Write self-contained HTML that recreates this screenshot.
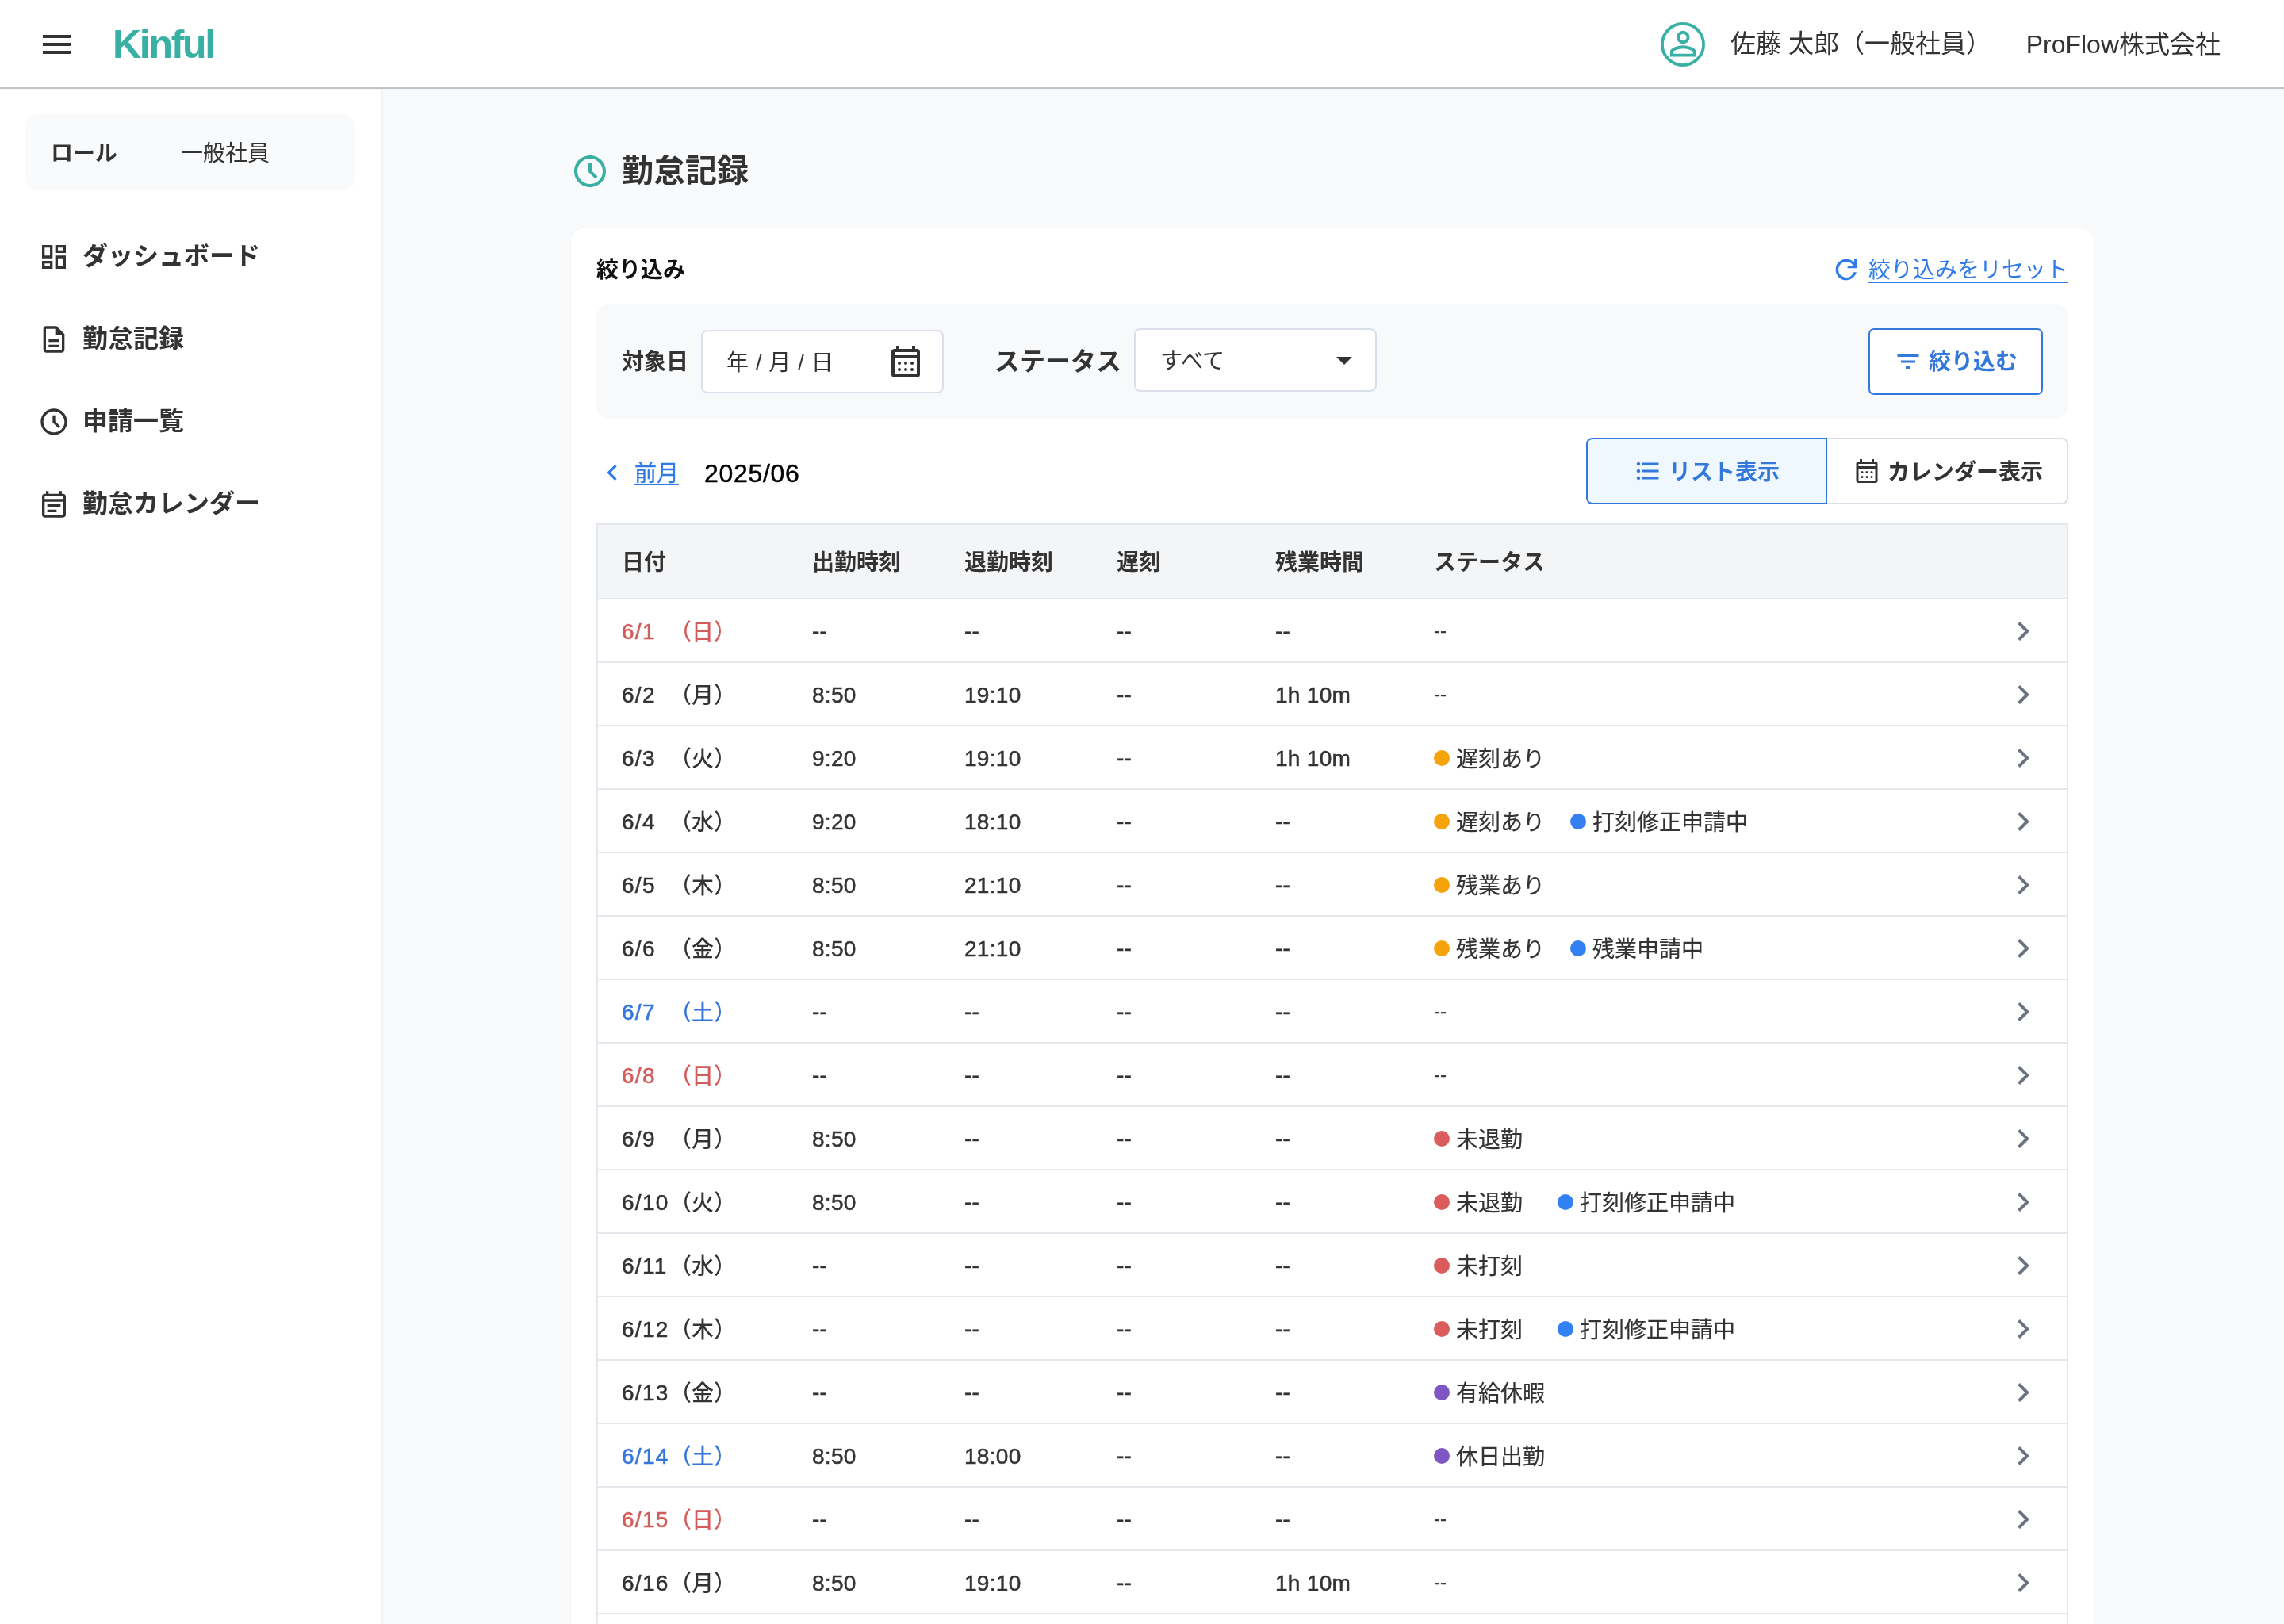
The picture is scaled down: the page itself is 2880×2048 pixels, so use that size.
<!DOCTYPE html>
<html lang="ja">
<head>
<meta charset="utf-8">
<title>勤怠記録 - Kinful</title>
<style>
*{box-sizing:border-box;margin:0;padding:0}
html,body{width:2880px;height:2048px;overflow:hidden;background:#f9fafb}
.hd,.sb,.ttl,.card{will-change:transform}
body{font-family:"Liberation Sans","Noto Sans CJK JP",sans-serif;color:#333;position:relative}
svg{display:block}
i{font-style:normal}
.abs{position:absolute;white-space:nowrap}
/* header */
.hd{position:absolute;left:0;top:0;width:2880px;height:112px;background:#fff;border-bottom:2px solid #c1c3c3;z-index:5;box-shadow:0 1px 2px rgba(0,0,0,.04)}
.hd .menu{position:absolute;left:48px;top:32px;width:48px;height:48px}
.hd .logo{position:absolute;left:142px;top:24px;font-size:50px;line-height:64px;font-weight:700;color:#38b0a3;letter-spacing:-2.3px}
.hd .avatar{position:absolute;left:2094px;top:28px;width:56px;height:56px}
.hd .uname{position:absolute;left:2182px;top:31px;font-size:32px;line-height:48px;color:#333;white-space:nowrap}
.hd .corp{position:absolute;right:80px;top:32px;font-size:32px;line-height:48px;color:#333;white-space:nowrap}
/* sidebar */
.sb{position:absolute;left:0;top:112px;width:480px;height:1936px;background:#fff;box-shadow:1px 0 4px rgba(0,0,0,.07)}
.role{position:absolute;left:32px;top:32px;width:416px;height:96px;border-radius:16px;background:#f9fafc;font-size:28px;line-height:99px;white-space:nowrap}
.role b{position:absolute;left:32px;font-weight:700;color:#333}
.role span{position:absolute;left:196px;color:#333}
.nav{position:absolute;left:0;width:480px;height:64px}
.nav svg{position:absolute;left:48px;top:12px;width:40px;height:40px;fill:#333}
.nav span{position:absolute;left:104px;top:0;font-size:32px;line-height:62px;font-weight:700;color:#333;white-space:nowrap}
/* main */
.ttl{position:absolute;left:720px;top:180px;height:72px}
.ttl svg{position:absolute;left:0;top:12px;width:48px;height:48px;fill:#38b0a3}
.ttl span{position:absolute;left:64px;top:1px;font-size:40px;line-height:68px;font-weight:700;color:#333;white-space:nowrap}
.card{position:absolute;left:720px;top:288px;width:1920px;height:1800px;background:#fff;border-radius:16px;box-shadow:0 0 4px rgba(0,0,0,.04)}
.h2{left:32px;top:27px;font-size:28px;line-height:52px;font-weight:700;color:#111}
.reset{right:32px;top:27px;font-size:28px;line-height:52px;color:#2f7be8;text-decoration:underline;text-underline-offset:5px;text-decoration-thickness:2px}
.reseti{left:1588px;top:32px;width:40px;height:40px;fill:#2f7be8}
.fbox{position:absolute;left:32px;top:96px;width:1856px;height:144px;border-radius:16px;background:#f8f9fb}
.lb1{left:32px;top:45px;font-size:28px;line-height:56px;font-weight:700;color:#333}
.lb2{left:502px;top:44px;font-size:32px;line-height:56px;font-weight:700;color:#333}
.inp{position:absolute;height:80px;border:2px solid #dbdfe9;border-radius:8px;background:#fff;font-size:28px;line-height:80px;color:#333;white-space:nowrap}
.inp.date{left:132px;top:32px;width:306px;padding-left:30px;word-spacing:1px}
.inp.sel{left:678px;top:30px;width:306px;padding-left:31px}
.inp svg{position:absolute}
.btn{position:absolute;left:1604px;top:30px;width:220px;height:84px;border:2px solid #3478dc;border-radius:7px;background:#fff;color:#3478dc;font-size:28px;font-weight:700;line-height:80px;white-space:nowrap}
.btn svg{position:absolute;left:30px;top:22px;width:36px;height:36px;fill:#3478dc}
.btn span{position:absolute;left:74px;top:1px}
.prev{left:80px;top:282px;font-size:28px;line-height:56px;color:#2f7be8;-webkit-text-stroke:.3px #2f7be8;text-decoration:underline;text-underline-offset:3px;text-decoration-thickness:2px}
.previ{left:32px;top:288px;width:40px;height:40px;fill:#2f7be8}
.ym{left:168px;top:281px;font-size:32px;line-height:56px;color:#000;letter-spacing:.7px;-webkit-text-stroke:.5px #000}
.tg{position:absolute;top:264px;height:84px;font-size:28px;font-weight:700;line-height:80px;white-space:nowrap}
.tg svg{position:absolute;top:22px;width:36px;height:36px}
.tg span{position:absolute;top:2px}
.tg.on{left:1280px;width:304px;border:2px solid #3478dc;border-radius:8px 0 0 8px;background:#f0f8ff;color:#3478dc;z-index:2}
.tg.off{left:1584px;width:304px;border:2px solid #d9dde6;border-left:none;border-radius:0 8px 8px 0;background:#fff;color:#333}
table{position:absolute;left:32px;top:372px;width:1856px;border-collapse:collapse;table-layout:fixed;font-size:28px;color:#333}
th,td{border-top:2px solid #e4e7ec;border-bottom:2px solid #e4e7ec;text-align:left;white-space:nowrap;vertical-align:middle;padding:0}
table{border:2px solid #e4e7ec}
th{height:94px;background:#f4f5f7;font-weight:700;font-size:28px;color:#333;padding-bottom:2px}
td{height:80px;font-weight:500;line-height:40px;padding-top:4px;letter-spacing:.3px;-webkit-text-stroke:.55px currentColor}
th:first-child,td:first-child{padding-left:30px}
.dn{display:inline-block;width:60px;letter-spacing:1.3px}
.wd{letter-spacing:0;-webkit-text-stroke:0;position:relative;top:1px}
tr.sun .c1{color:#d45b5b}
tr.sat .c1{color:#3575db}
td.st{font-weight:400;letter-spacing:0;-webkit-text-stroke:0}
.none{font-size:24px;color:#333;position:relative;top:-3px;-webkit-text-stroke:.25px #333}
.d{position:relative;top:-1.5px}
td.cv{padding-top:1px}
.tag{display:inline-block;margin-right:32px;min-width:124px;position:relative;top:1px;-webkit-text-stroke:.2px currentColor}
.dot{display:inline-block;width:20px;height:20px;border-radius:50%;margin-right:8px;vertical-align:0px;position:relative;top:-1px}
.dot.o{background:#f5a30a}.dot.b{background:#3380f2}.dot.r{background:#db5c5c}.dot.p{background:#7e57c2}
.chev{width:48px;height:48px;fill:#6b7280}
</style>
</head>
<body>
<div class="hd">
  <svg class="menu" viewBox="0 0 24 24"><path d="M3 6h18v2H3zM3 11h18v2H3zM3 16h18v2H3z" fill="#333"/></svg>
  <div class="logo">Kinful</div>
  <svg class="avatar" viewBox="0 0 56 56"><circle cx="28" cy="28" r="26.1" fill="none" stroke="#38b0a3" stroke-width="3.8"/><path transform="translate(3.7 2.6) scale(2.05)" fill="#38b0a3" d="M12 5.900c1.160 0 2.100.940 2.100 2.100s-.940 2.100-2.100 2.100S9.900 9.160 9.900 8s.940-2.100 2.100-2.100m0 9c2.970 0 6.100 1.460 6.100 2.100v1.100H5.900V17c0-.640 3.130-2.100 6.100-2.100M12 4C9.790 4 8 5.790 8 8s1.790 4 4 4 4-1.790 4-4-1.790-4-4-4zm0 9c-2.670 0-8 1.340-8 4v3h16v-3c0-2.660-5.330-4-8-4z"/></svg>
  <div class="uname">佐藤 太郎（一般社員）</div>
  <div class="corp">ProFlow株式会社</div>
</div>
<div class="sb">
  <div class="role"><b>ロール</b><span>一般社員</span></div>
  <div class="nav" style="top:180px"><svg viewBox="0 0 24 24"><path d="M19 5v2h-4V5h4M9 5v6H5V5h4m10 8v6h-4v-6h4M9 17v2H5v-2h4M21 3h-8v6h8V3zM11 3H3v10h8V3zm10 8h-8v10h8V11zm-10 4H3v6h8v-6z"/></svg><span>ダッシュボード</span></div>
  <div class="nav" style="top:284px"><svg viewBox="0 0 24 24"><path d="M8 16h8v2H8zm0-4h8v2H8zm6-10H6c-1.100 0-2 .9-2 2v16c0 1.100.890 2 1.990 2H18c1.100 0 2-.9 2-2V8l-6-6zm4 18H6V4h7v5h5v11z"/></svg><span>勤怠記録</span></div>
  <div class="nav" style="top:388px"><svg viewBox="0 0 24 24"><path d="M12 2C6.480 2 2 6.480 2 12s4.480 10 10 10 10-4.480 10-10S17.520 2 12 2zm0 18c-4.420 0-8-3.580-8-8s3.580-8 8-8 8 3.580 8 8-3.580 8-8 8zM11 7h2v4.600l3.700 3.700-1.400 1.400L11 12.400z"/></svg><span>申請一覧</span></div>
  <div class="nav" style="top:492px"><svg viewBox="0 0 24 24"><path d="M19 4h-1V2h-2v2H8V2H6v2H5c-1.110 0-1.990.9-1.990 2L3 20c0 1.100.890 2 2 2h14c1.100 0 2-.9 2-2V6c0-1.100-.9-2-2-2zm0 16H5V10h14v10zM5 8V6h14v2H5zm2 4h10v2H7zm0 4h7v2H7z"/></svg><span>勤怠カレンダー</span></div>
</div>
<div class="ttl"><svg viewBox="0 0 24 24"><path d="M12 2C6.480 2 2 6.480 2 12s4.480 10 10 10 10-4.480 10-10S17.520 2 12 2zm0 18c-4.420 0-8-3.580-8-8s3.580-8 8-8 8 3.580 8 8-3.580 8-8 8zM11 7h2v4.600l3.700 3.700-1.400 1.400L11 12.400z"/></svg><span>勤怠記録</span></div>
<div class="card">
  <div class="abs h2">絞り込み</div>
  <svg class="abs reseti" viewBox="0 0 24 24"><path d="M12 20q-3.350 0-5.675-2.325T4 12t2.325-5.675T12 4q1.725 0 3.300.712T18 6.750V4h2v7h-7V9h4.200q-.8-1.400-2.187-2.200T12 6Q9.500 6 7.750 7.750T6 12t1.750 4.250T12 18q1.925 0 3.475-1.100T17.650 14h2.100q-.7 2.650-2.850 4.325T12 20"/></svg>
  <div class="abs reset">絞り込みをリセット</div>
  <div class="fbox">
    <div class="abs lb1">対象日</div>
    <div class="inp date">年 / 月 / 日<svg style="left:232px;top:14px;width:48px;height:48px" viewBox="0 0 24 24" fill="#333"><path fill-rule="evenodd" d="M5 4h1V2h2v2h8V2h2v2h1a2 2 0 0 1 2 2v14a2 2 0 0 1-2 2H5a2 2 0 0 1-2-2V6a2 2 0 0 1 2-2zm0 2v2h14V6zm0 4v10h14V10z"/><circle cx="8" cy="13" r="1"/><circle cx="12" cy="13" r="1"/><circle cx="16" cy="13" r="1"/><circle cx="8" cy="17" r="1"/><circle cx="12" cy="17" r="1"/><circle cx="16" cy="17" r="1"/></svg></div>
    <div class="abs lb2">ステータス</div>
    <div class="inp sel">すべて<svg style="left:239px;top:14px;width:48px;height:48px" viewBox="0 0 24 24" fill="#333"><path d="M7 10l5 5 5-5z"/></svg></div>
    <div class="btn"><svg viewBox="0 0 24 24"><path d="M10 18h4v-2h-4v2zM3 6v2h18V6H3zm3 7h12v-2H6v2z"/></svg><span>絞り込む</span></div>
  </div>
  <svg class="abs previ" viewBox="0 0 24 24"><path d="M15.410 7.410 14 6l-6 6 6 6 1.410-1.410L10.830 12z"/></svg>
  <div class="abs prev">前月</div>
  <div class="abs ym">2025/06</div>
  <div class="tg on"><svg style="left:58px;fill:#3478dc" viewBox="0 0 24 24"><path d="M4 10.500c-.83 0-1.500.67-1.500 1.500s.67 1.500 1.500 1.500 1.500-.67 1.500-1.500-.67-1.500-1.500-1.500zm0-6c-.83 0-1.500.67-1.500 1.500S3.170 7.500 4 7.500 5.500 6.830 5.500 6 4.830 4.500 4 4.500zm0 12c-.83 0-1.500.68-1.500 1.500s.68 1.500 1.500 1.500 1.500-.68 1.500-1.500-.67-1.500-1.500-1.500zM7 19h14v-2H7v2zm0-6h14v-2H7v2zm0-8v2h14V5H7z"/></svg><span style="left:102px">リスト表示</span></div>
  <div class="tg off"><svg style="left:32px;fill:#333" viewBox="0 0 24 24"><path fill-rule="evenodd" d="M5 4h1V2h2v2h8V2h2v2h1a2 2 0 0 1 2 2v14a2 2 0 0 1-2 2H5a2 2 0 0 1-2-2V6a2 2 0 0 1 2-2zm0 2v2h14V6zm0 4v10h14V10z"/><circle cx="8" cy="13" r="1"/><circle cx="12" cy="13" r="1"/><circle cx="16" cy="13" r="1"/><circle cx="8" cy="17" r="1"/><circle cx="12" cy="17" r="1"/><circle cx="16" cy="17" r="1"/></svg><span style="left:76px">カレンダー表示</span></div>
  <table>
    <colgroup><col style="width:271px"><col style="width:192px"><col style="width:192px"><col style="width:200px"><col style="width:200px"><col><col style="width:80px"></colgroup>
    <thead><tr><th>日付</th><th>出勤時刻</th><th>退勤時刻</th><th>遅刻</th><th>残業時間</th><th>ステータス</th><th></th></tr></thead>
    <tbody>
<tr class="sun"><td class="c1"><span class="dn">6/1</span><span class="wd">（日）</span></td><td><i class="d">--</i></td><td><i class="d">--</i></td><td><i class="d">--</i></td><td><i class="d">--</i></td><td class="st"><span class="none">--</span></td><td class="cv"><svg class="chev" viewBox="0 0 24 24"><path d="M8.59 16.59 13.17 12 8.59 7.410 10 6l6 6-6 6z"/></svg></td></tr>
<tr class=""><td class="c1"><span class="dn">6/2</span><span class="wd">（月）</span></td><td>8:50</td><td>19:10</td><td><i class="d">--</i></td><td>1h 10m</td><td class="st"><span class="none">--</span></td><td class="cv"><svg class="chev" viewBox="0 0 24 24"><path d="M8.59 16.59 13.17 12 8.59 7.410 10 6l6 6-6 6z"/></svg></td></tr>
<tr class=""><td class="c1"><span class="dn">6/3</span><span class="wd">（火）</span></td><td>9:20</td><td>19:10</td><td><i class="d">--</i></td><td>1h 10m</td><td class="st"><span class="tag"><i class="dot o"></i>遅刻あり</span></td><td class="cv"><svg class="chev" viewBox="0 0 24 24"><path d="M8.59 16.59 13.17 12 8.59 7.410 10 6l6 6-6 6z"/></svg></td></tr>
<tr class=""><td class="c1"><span class="dn">6/4</span><span class="wd">（水）</span></td><td>9:20</td><td>18:10</td><td><i class="d">--</i></td><td><i class="d">--</i></td><td class="st"><span class="tag"><i class="dot o"></i>遅刻あり</span><span class="tag"><i class="dot b"></i>打刻修正申請中</span></td><td class="cv"><svg class="chev" viewBox="0 0 24 24"><path d="M8.59 16.59 13.17 12 8.59 7.410 10 6l6 6-6 6z"/></svg></td></tr>
<tr class=""><td class="c1"><span class="dn">6/5</span><span class="wd">（木）</span></td><td>8:50</td><td>21:10</td><td><i class="d">--</i></td><td><i class="d">--</i></td><td class="st"><span class="tag"><i class="dot o"></i>残業あり</span></td><td class="cv"><svg class="chev" viewBox="0 0 24 24"><path d="M8.59 16.59 13.17 12 8.59 7.410 10 6l6 6-6 6z"/></svg></td></tr>
<tr class=""><td class="c1"><span class="dn">6/6</span><span class="wd">（金）</span></td><td>8:50</td><td>21:10</td><td><i class="d">--</i></td><td><i class="d">--</i></td><td class="st"><span class="tag"><i class="dot o"></i>残業あり</span><span class="tag"><i class="dot b"></i>残業申請中</span></td><td class="cv"><svg class="chev" viewBox="0 0 24 24"><path d="M8.59 16.59 13.17 12 8.59 7.410 10 6l6 6-6 6z"/></svg></td></tr>
<tr class="sat"><td class="c1"><span class="dn">6/7</span><span class="wd">（土）</span></td><td><i class="d">--</i></td><td><i class="d">--</i></td><td><i class="d">--</i></td><td><i class="d">--</i></td><td class="st"><span class="none">--</span></td><td class="cv"><svg class="chev" viewBox="0 0 24 24"><path d="M8.59 16.59 13.17 12 8.59 7.410 10 6l6 6-6 6z"/></svg></td></tr>
<tr class="sun"><td class="c1"><span class="dn">6/8</span><span class="wd">（日）</span></td><td><i class="d">--</i></td><td><i class="d">--</i></td><td><i class="d">--</i></td><td><i class="d">--</i></td><td class="st"><span class="none">--</span></td><td class="cv"><svg class="chev" viewBox="0 0 24 24"><path d="M8.59 16.59 13.17 12 8.59 7.410 10 6l6 6-6 6z"/></svg></td></tr>
<tr class=""><td class="c1"><span class="dn">6/9</span><span class="wd">（月）</span></td><td>8:50</td><td><i class="d">--</i></td><td><i class="d">--</i></td><td><i class="d">--</i></td><td class="st"><span class="tag"><i class="dot r"></i>未退勤</span></td><td class="cv"><svg class="chev" viewBox="0 0 24 24"><path d="M8.59 16.59 13.17 12 8.59 7.410 10 6l6 6-6 6z"/></svg></td></tr>
<tr class=""><td class="c1"><span class="dn">6/10</span><span class="wd">（火）</span></td><td>8:50</td><td><i class="d">--</i></td><td><i class="d">--</i></td><td><i class="d">--</i></td><td class="st"><span class="tag"><i class="dot r"></i>未退勤</span><span class="tag"><i class="dot b"></i>打刻修正申請中</span></td><td class="cv"><svg class="chev" viewBox="0 0 24 24"><path d="M8.59 16.59 13.17 12 8.59 7.410 10 6l6 6-6 6z"/></svg></td></tr>
<tr class=""><td class="c1"><span class="dn">6/11</span><span class="wd">（水）</span></td><td><i class="d">--</i></td><td><i class="d">--</i></td><td><i class="d">--</i></td><td><i class="d">--</i></td><td class="st"><span class="tag"><i class="dot r"></i>未打刻</span></td><td class="cv"><svg class="chev" viewBox="0 0 24 24"><path d="M8.59 16.59 13.17 12 8.59 7.410 10 6l6 6-6 6z"/></svg></td></tr>
<tr class=""><td class="c1"><span class="dn">6/12</span><span class="wd">（木）</span></td><td><i class="d">--</i></td><td><i class="d">--</i></td><td><i class="d">--</i></td><td><i class="d">--</i></td><td class="st"><span class="tag"><i class="dot r"></i>未打刻</span><span class="tag"><i class="dot b"></i>打刻修正申請中</span></td><td class="cv"><svg class="chev" viewBox="0 0 24 24"><path d="M8.59 16.59 13.17 12 8.59 7.410 10 6l6 6-6 6z"/></svg></td></tr>
<tr class=""><td class="c1"><span class="dn">6/13</span><span class="wd">（金）</span></td><td><i class="d">--</i></td><td><i class="d">--</i></td><td><i class="d">--</i></td><td><i class="d">--</i></td><td class="st"><span class="tag"><i class="dot p"></i>有給休暇</span></td><td class="cv"><svg class="chev" viewBox="0 0 24 24"><path d="M8.59 16.59 13.17 12 8.59 7.410 10 6l6 6-6 6z"/></svg></td></tr>
<tr class="sat"><td class="c1"><span class="dn">6/14</span><span class="wd">（土）</span></td><td>8:50</td><td>18:00</td><td><i class="d">--</i></td><td><i class="d">--</i></td><td class="st"><span class="tag"><i class="dot p"></i>休日出勤</span></td><td class="cv"><svg class="chev" viewBox="0 0 24 24"><path d="M8.59 16.59 13.17 12 8.59 7.410 10 6l6 6-6 6z"/></svg></td></tr>
<tr class="sun"><td class="c1"><span class="dn">6/15</span><span class="wd">（日）</span></td><td><i class="d">--</i></td><td><i class="d">--</i></td><td><i class="d">--</i></td><td><i class="d">--</i></td><td class="st"><span class="none">--</span></td><td class="cv"><svg class="chev" viewBox="0 0 24 24"><path d="M8.59 16.59 13.17 12 8.59 7.410 10 6l6 6-6 6z"/></svg></td></tr>
<tr class=""><td class="c1"><span class="dn">6/16</span><span class="wd">（月）</span></td><td>8:50</td><td>19:10</td><td><i class="d">--</i></td><td>1h 10m</td><td class="st"><span class="none">--</span></td><td class="cv"><svg class="chev" viewBox="0 0 24 24"><path d="M8.59 16.59 13.17 12 8.59 7.410 10 6l6 6-6 6z"/></svg></td></tr>
<tr class=""><td class="c1"><span class="dn">6/17</span><span class="wd">（火）</span></td><td>8:50</td><td>19:10</td><td><i class="d">--</i></td><td>1h 10m</td><td class="st"><span class="none">--</span></td><td class="cv"><svg class="chev" viewBox="0 0 24 24"><path d="M8.59 16.59 13.17 12 8.59 7.410 10 6l6 6-6 6z"/></svg></td></tr>
    </tbody>
  </table>
</div>
</body>
</html>
